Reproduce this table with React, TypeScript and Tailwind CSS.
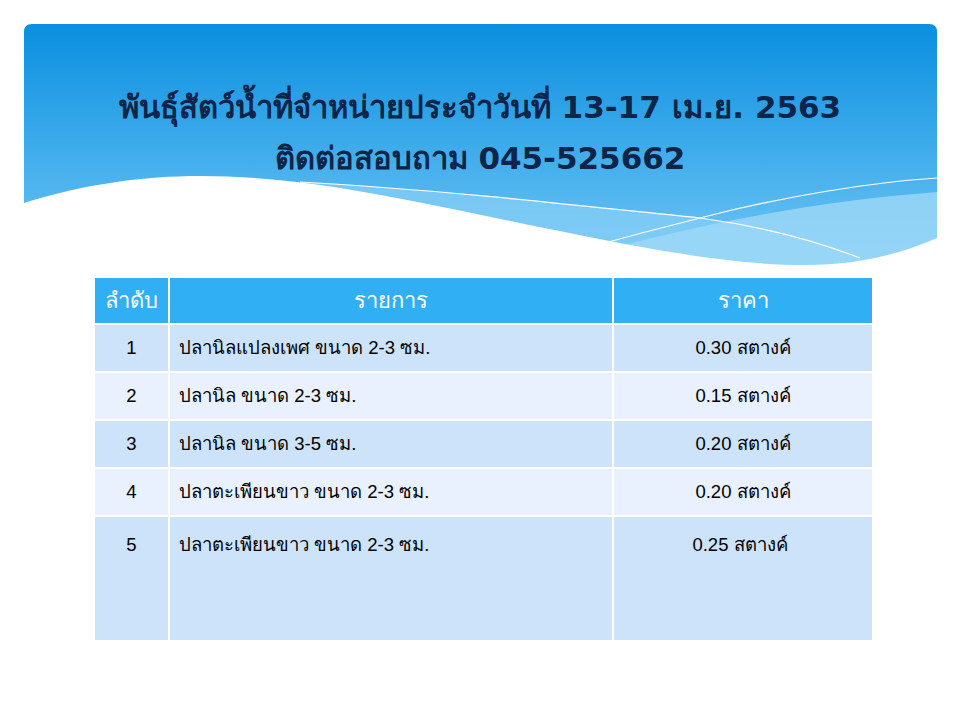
import React from 'react'

const rows = [
  { no: '1', item: 'ปลานิลแปลงเพศ ขนาด 2-3 ซม.', price: '0.30 สตางค์' },
  { no: '2', item: 'ปลานิล ขนาด 2-3 ซม.', price: '0.15 สตางค์' },
  { no: '3', item: 'ปลานิล ขนาด 3-5 ซม.', price: '0.20 สตางค์' },
  { no: '4', item: 'ปลาตะเพียนขาว ขนาด 2-3 ซม.', price: '0.20 สตางค์' },
]

function Banner() {
  return (
    <div className="relative mx-[24px] mt-[24px] h-[241px]">
      <svg className="absolute inset-0" width="913" height="241" viewBox="0 0 913 241">
        <defs>
          <linearGradient id="sky" x1="0" y1="0" x2="0" y2="1">
            <stop offset="0" stopColor="#0a8fe0" />
            <stop offset="1" stopColor="#70c6f5" />
          </linearGradient>
        </defs>
        <path d="M8 0 H905 Q913 0 913 8 V241 H0 V8 Q0 0 8 0 Z" fill="url(#sky)" />
        {/* lighter bands */}
        <path d="M276 158 C420 166 560 182 676 194 C750 204 800 220 836 234 L836 241 H300 Z" fill="#86cdf5" opacity="0.75" />
        <path d="M566 230 C660 204 780 178 913 168 V241 H566 Z" fill="#9dd8f8" opacity="0.8" />
        {/* thin lines */}
        <path d="M276 158 C420 166 560 182 676 194 C750 204 800 220 836 234" stroke="#ffffff" strokeWidth="1.2" fill="none" />
        <path d="M566 223 C620 208 660 198 676 194 C760 172 850 158 913 154" stroke="#ffffff" strokeWidth="1.2" fill="none" />
        {/* white wave */}
        <path d="M0 179 C60 160 120 152 176 152 C300 152 420 185 560 212 C650 230 720 241 780 241 C840 241 880 228 913 214 V241 H0 Z" fill="#ffffff" />
      </svg>
      <div className="relative flex flex-col items-center pt-[58px] text-[#0c2548] font-bold text-[31px] leading-[51px] font-['Tahoma','DejaVu_Sans',sans-serif]">
        <div>พันธุ์สัตว์น้ำที่จำหน่ายประจำวันที่ 13-17 เม.ย. 2563</div>
        <div>ติดต่อสอบถาม 045-525662</div>
      </div>
    </div>
  )
}

export default function App() {
  return (
    <div className="w-[960px] h-[720px] bg-white overflow-hidden font-['Liberation_Sans',Arial,sans-serif]">
      <Banner />
      <div className="mt-[13px] ml-[95px] w-[777px] grid grid-cols-[73px_442px_258px] gap-[2px] bg-white text-[18.5px]">
        <div className="h-[45px] bg-[#30aff5] text-white text-[22px] flex items-center justify-center">ลำดับ</div>
        <div className="h-[45px] bg-[#30aff5] text-white text-[22px] flex items-center justify-center">รายการ</div>
        <div className="h-[45px] bg-[#30aff5] text-white text-[22px] flex items-center justify-center">ราคา</div>
        {rows.map((r, i) => (
          <React.Fragment key={r.no}>
            <div className={`h-[46px] flex items-center justify-center text-black ${i % 2 === 0 ? 'bg-[#cde3fa]' : 'bg-[#e8f1fd]'}`}>{r.no}</div>
            <div className={`h-[46px] flex items-center pl-[9px] text-black ${i % 2 === 0 ? 'bg-[#cde3fa]' : 'bg-[#e8f1fd]'}`}>{r.item}</div>
            <div className={`h-[46px] flex items-center justify-center text-black ${i % 2 === 0 ? 'bg-[#cde3fa]' : 'bg-[#e8f1fd]'}`}>{r.price}</div>
          </React.Fragment>
        ))}
        <div className="h-[123px] bg-[#cde3fa] pt-[14px] text-center text-black">5</div>
        <div className="h-[123px] bg-[#cde3fa] pt-[14px] pl-[9px] text-black">ปลาตะเพียนขาว ขนาด 2-3 ซม.</div>
        <div className="h-[123px] bg-[#cde3fa] pt-[14px] pr-[6px] text-center text-black">0.25 สตางค์</div>
      </div>
    </div>
  )
}
